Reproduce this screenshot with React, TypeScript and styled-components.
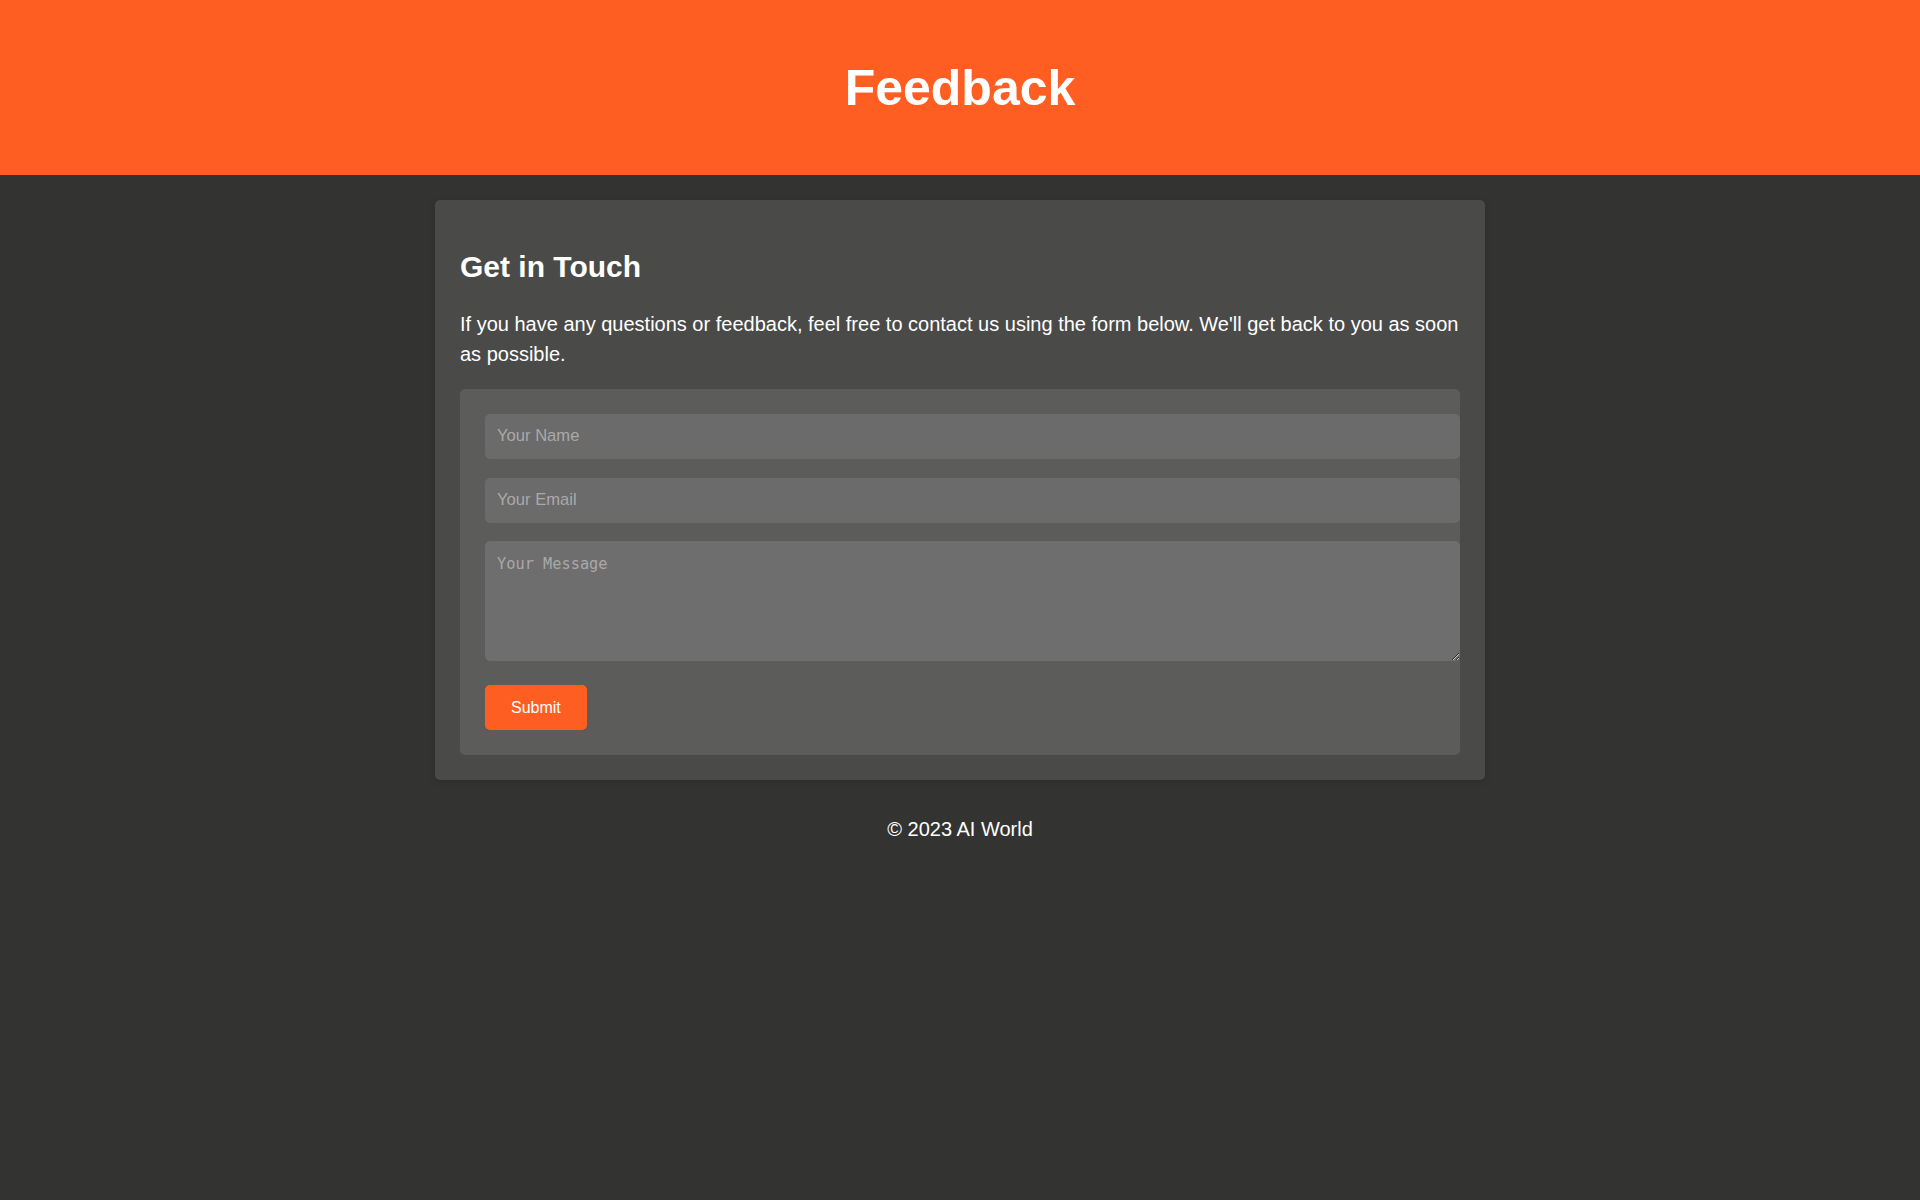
import React from "react";
import styled, { createGlobalStyle } from "styled-components";

const GlobalStyle = createGlobalStyle`
  html, body {
    margin: 0;
    padding: 0;
    background: #333431;
  }
  body {
    font-family: "Liberation Sans", Arial, sans-serif;
    font-size: 20px;
    color: #ffffff;
    min-height: 1200px;
  }
`;

const Header = styled.header`
  height: 175px;
  background: #ff5e22;
  display: flex;
  align-items: center;
  justify-content: center;
`;

const Title = styled.h1`
  margin: 0;
  font-size: 50px;
  font-weight: 700;
  line-height: normal;
  color: #ffffff;
`;

const Main = styled.main`
  display: flex;
  justify-content: center;
  padding-top: 25px;
`;

const Card = styled.section`
  box-sizing: border-box;
  width: 1050px;
  padding: 25px;
  background: #4a4b48;
  border-radius: 5px;
  box-shadow: 0 2px 6px rgba(0, 0, 0, 0.12);
`;

const Heading = styled.h2`
  margin: 25px 0;
  font-size: 30px;
  font-weight: 700;
  line-height: normal;
`;

const Intro = styled.p`
  margin: 0 0 20px;
  font-size: 20px;
  line-height: 1.5;
`;

const Form = styled.form`
  display: flex;
  flex-direction: column;
  align-items: flex-start;
  padding: 25px 0 25px 25px;
  background: #5c5c5b;
  border-radius: 5px;
`;

const fieldBase = `
  box-sizing: border-box;
  width: 100%;
  border: none;
  outline: none;
  border-radius: 5px;
  background: #6b6b6b;
  color: #ffffff;
  padding: 0 12px;
`;

const TextInput = styled.input<{ $gap: number }>`
  ${fieldBase}
  height: 45px;
  padding-bottom: 2px;
  margin-bottom: ${(p) => p.$gap}px;
  font-family: "Liberation Sans", Arial, sans-serif;
  font-size: 16.6px;
  &::placeholder {
    color: #a9a9a9;
  }
`;

const MessageInput = styled.textarea`
  ${fieldBase}
  display: block;
  height: 120px;
  padding-top: 14px;
  margin-bottom: 24px;
  font-family: "DejaVu Sans Mono", monospace;
  font-size: 15.3px;
  background: #6e6e6e;
  &::placeholder {
    color: #a9a9a9;
  }
`;

const SubmitButton = styled.button`
  height: 45px;
  padding: 0 26px;
  border: none;
  border-radius: 5px;
  background: #ff5e22;
  color: #ffffff;
  font-family: "Liberation Sans", Arial, sans-serif;
  font-size: 16px;
  cursor: pointer;
`;

const Footer = styled.footer`
  padding-top: 38px;
  text-align: center;
  font-size: 20px;
  line-height: normal;
`;

export default function App() {
  return (
    <>
      <GlobalStyle />
      <Header>
        <Title>Feedback</Title>
      </Header>
      <Main>
        <Card>
          <Heading>Get in Touch</Heading>
          <Intro>
            If you have any questions or feedback, feel free to contact us using the form below. We'll get back to you as soon as possible.
          </Intro>
          <Form onSubmit={(e) => e.preventDefault()}>
            <TextInput type="text" placeholder="Your Name" $gap={19} />
            <TextInput type="email" placeholder="Your Email" $gap={18} />
            <MessageInput placeholder="Your Message" />
            <SubmitButton type="submit">Submit</SubmitButton>
          </Form>
        </Card>
      </Main>
      <Footer>© 2023 AI World</Footer>
    </>
  );
}
